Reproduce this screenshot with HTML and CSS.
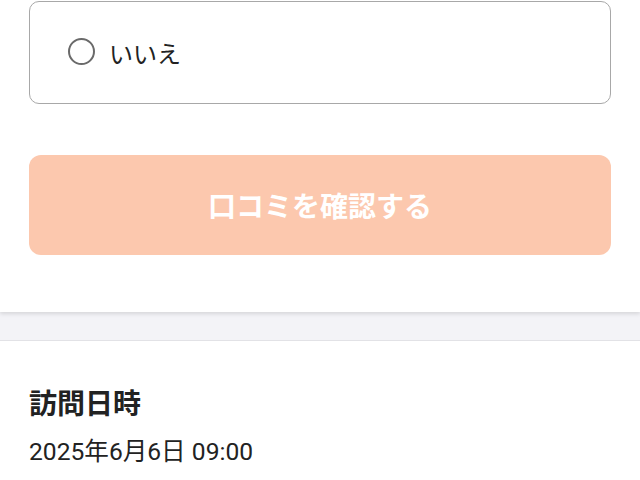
FILE: index.html
```html
<!DOCTYPE html>
<html lang="ja">
<head>
<meta charset="utf-8">
<link rel="stylesheet" href="styles.css">
</head>
<body>
<section class="form-section">
  <label class="option">
    <span class="radio"></span>
    <span class="option-label">いいえ</span>
  </label>
  <button class="submit" type="button">口コミを確認する</button>
</section>
<div class="spacer"></div>
<section class="info-section">
  <h2 class="info-title">訪問日時</h2>
  <p class="info-value">2025年6月6日 09:00</p>
</section>
</body>
</html>
```
FILE: styles.css
```css
html, body {
  margin: 0;
  padding: 0;
  background: #ffffff;
  font-family: Roboto, "Noto Sans CJK JP", sans-serif;
  color: #222222;
}
.form-section {
  background: #ffffff;
  padding: 1px 29px 57px 29px;
  position: relative;
  z-index: 1;
  box-shadow: 0 2px 4px rgba(0,0,0,0.12);
}
.option {
  display: flex;
  align-items: center;
  box-sizing: border-box;
  height: 103px;
  border: 1.5px solid #a8a8a8;
  border-radius: 10px;
  padding-left: 38px;
}
.radio {
  box-sizing: border-box;
  width: 27px;
  height: 27px;
  border: 2px solid #6a6a6a;
  border-radius: 50%;
  margin-top: -2px;
}
.option-label {
  margin-left: 14px;
  font-size: 24px;
  color: #222222;
}
.submit {
  display: block;
  width: 100%;
  height: 100px;
  margin-top: 51px;
  border: none;
  border-radius: 12px;
  background: #fcc8ae;
  color: #ffffff;
  font-family: Roboto, "Noto Sans CJK JP", sans-serif;
  font-weight: 700;
  font-size: 28px;
  padding: 0;
}
.spacer {
  height: 28px;
  background: #f3f3f7;
  border-bottom: 1px solid #e2e2e6;
}
.info-section {
  padding: 46px 29px 0 29px;
}
.info-title {
  margin: 0;
  font-size: 28px;
  font-weight: 700;
  line-height: 36px;
  color: #222222;
}
.info-value {
  margin: 13px 0 0 0;
  font-size: 24.6px;
  line-height: 32px;
  color: #222222;
}
```
